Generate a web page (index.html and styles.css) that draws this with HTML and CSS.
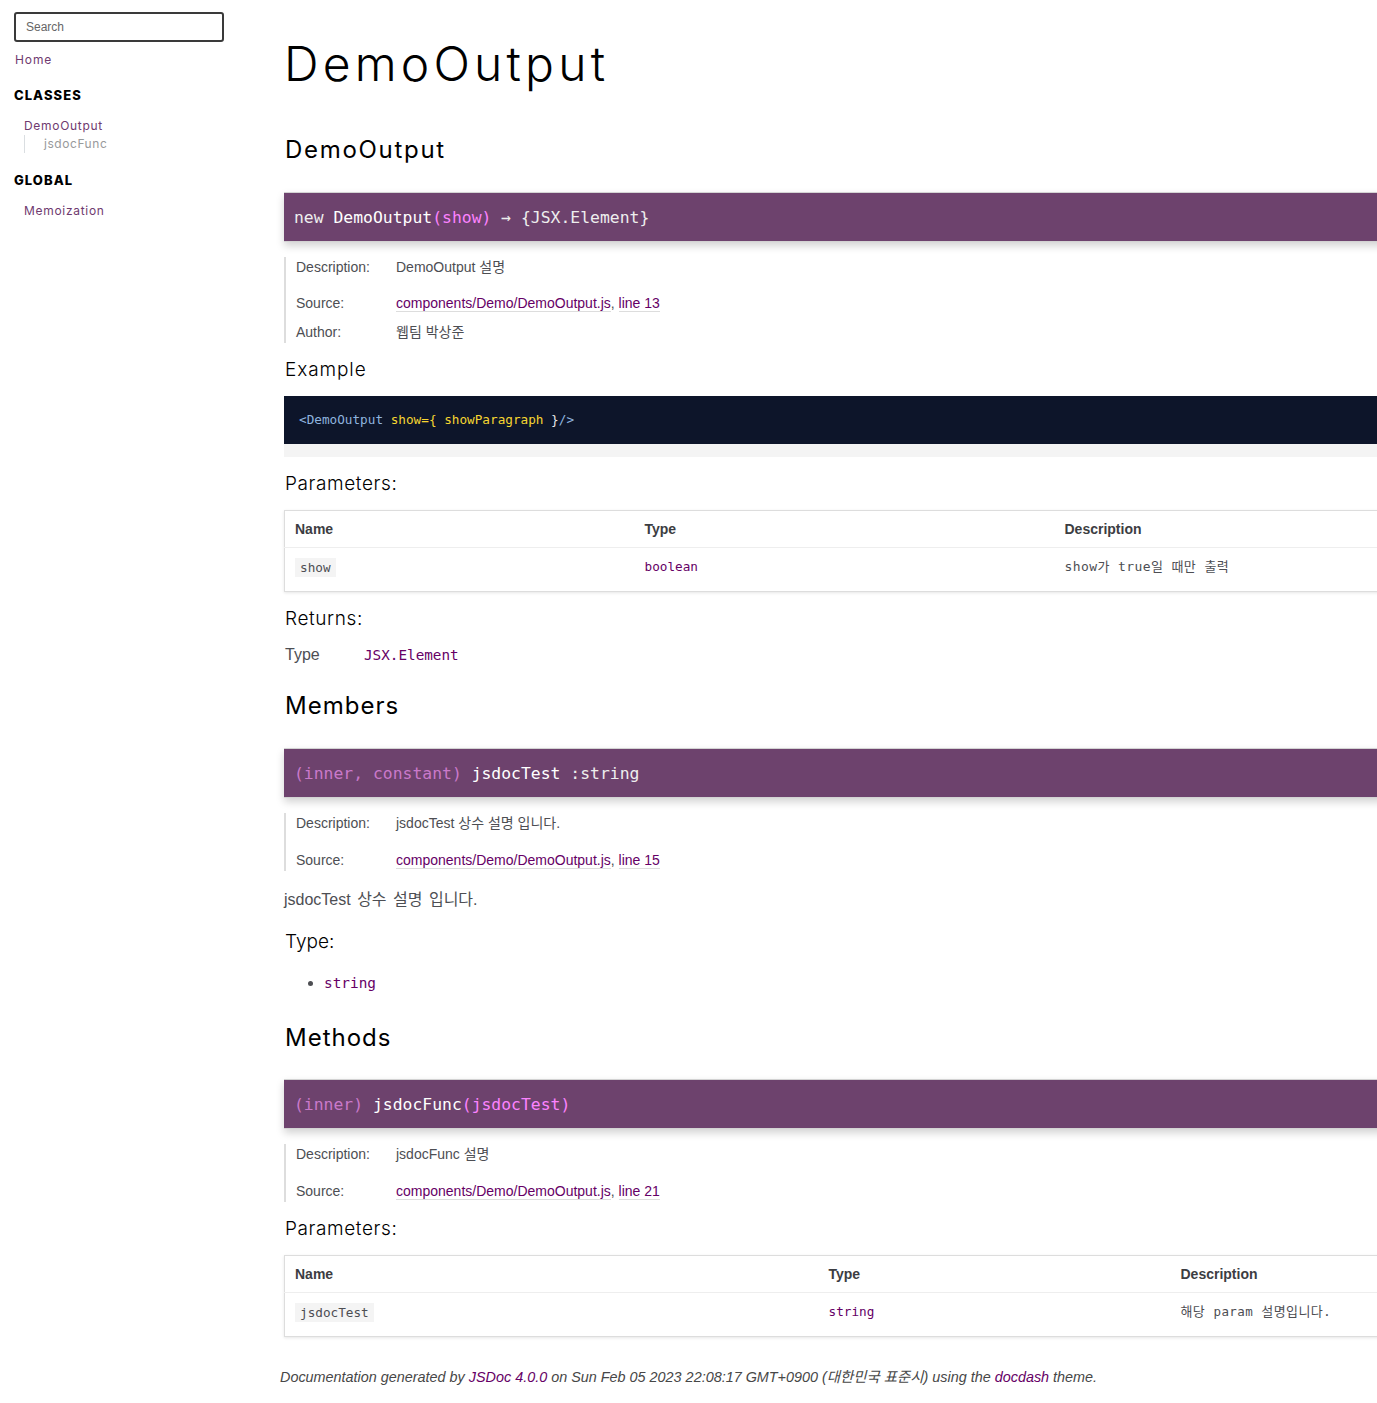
FILE: index.html
```html
<!DOCTYPE html>
<html lang="ko">
<head>
<meta charset="utf-8">
<title>DemoOutput - Documentation</title>
<link rel="stylesheet" href="styles.css">
</head>
<body>
<div class="page">
  <nav class="nav">
    <input class="search-box" type="text" placeholder="Search">
    <h2 class="nav-home"><a href="#">Home</a></h2>
    <h3 class="nav-title">Classes</h3>
    <ul class="nav-list">
      <li><a href="#" class="nav-link">DemoOutput</a>
        <ul class="nav-sub">
          <li><a href="#" class="nav-sublink">jsdocFunc</a></li>
        </ul>
      </li>
    </ul>
    <h3 class="nav-title nav-title-global">Global</h3>
    <ul class="nav-list">
      <li><a href="#" class="nav-link nav-link-global">Memoization</a></li>
    </ul>
  </nav>

  <div class="main">
    <h1 class="page-title">DemoOutput</h1>
    <section class="section">
      <h3 class="h-sub">DemoOutput</h3>

      <h4 class="name name-first"><span class="kw">new </span>DemoOutput<span class="signature">(show)</span><span class="type-last"> → {JSX.Element}</span></h4>

      <dl class="details">
        <div class="drow drow-desc"><dt>Description:</dt><dd>DemoOutput 설명</dd></div>
        <div class="drow drow-source"><dt>Source:</dt><dd><a class="ulink" href="#">components/Demo/DemoOutput.js</a>, <a class="ulink" href="#">line 13</a></dd></div>
        <div class="drow"><dt>Author:</dt><dd>웹팀 박상준</dd></div>
      </dl>

      <h5 class="h-small h-example">Example</h5>
      <pre class="prettyprint"><code class="code-block"><span class="tk-tag">&lt;DemoOutput</span> <span class="tk-atn">show</span><span class="tk-pun">=</span><span class="tk-brace">{</span> <span class="tk-atn">showParagraph</span> <span class="tk-pln">}</span><span class="tk-tag">/&gt;</span></code></pre>

      <h5 class="h-small h-params">Parameters:</h5>
      <table class="params params-one">
        <thead>
          <tr><th class="col-name1">Name</th><th class="col-type1">Type</th><th>Description</th></tr>
        </thead>
        <tbody>
          <tr>
            <td><code class="pcode">show</code></td>
            <td class="param-type">boolean</td>
            <td class="pdesc">show가 true일 때만 출력</td>
          </tr>
        </tbody>
      </table>

      <h5 class="h-small h-returns">Returns:</h5>
      <div class="returns"><span class="returns-label">Type</span><span class="param-type returns-type">JSX.Element</span></div>

      <h3 class="h-sub h-members">Members</h3>
      <h4 class="name name-next"><span class="type-sig">(inner, constant)</span> jsdocTest <span class="type-last">:string</span></h4>
      <dl class="details">
        <div class="drow drow-desc2"><dt>Description:</dt><dd>jsdocTest 상수 설명 입니다.</dd></div>
        <div class="drow"><dt>Source:</dt><dd><a class="ulink" href="#">components/Demo/DemoOutput.js</a>, <a class="ulink" href="#">line 15</a></dd></div>
      </dl>
      <p class="description">jsdocTest 상수 설명 입니다.</p>
      <h5 class="h-small h-type">Type:</h5>
      <ul class="type-list"><li><span class="param-type">string</span></li></ul>

      <h3 class="h-sub h-methods">Methods</h3>
      <h4 class="name name-next name-last"><span class="type-sig">(inner)</span> jsdocFunc<span class="signature">(jsdocTest)</span></h4>
      <dl class="details">
        <div class="drow drow-desc2"><dt>Description:</dt><dd>jsdocFunc 설명</dd></div>
        <div class="drow"><dt>Source:</dt><dd><a class="ulink" href="#">components/Demo/DemoOutput.js</a>, <a class="ulink" href="#">line 21</a></dd></div>
      </dl>

      <h5 class="h-small h-params2">Parameters:</h5>
      <table class="params params-two">
        <thead>
          <tr><th class="col-name2">Name</th><th class="col-type2">Type</th><th>Description</th></tr>
        </thead>
        <tbody>
          <tr>
            <td><code class="pcode">jsdocTest</code></td>
            <td class="param-type">string</td>
            <td class="pdesc">해당 <span class="pdesc-code">param</span> 설명입니다.</td>
          </tr>
        </tbody>
      </table>
    </section>

    <footer class="footer">Documentation generated by <a href="#">JSDoc 4.0.0</a> on Sun Feb 05 2023 22:08:17 GMT+0900 (대한민국 표준시) using the <a href="#">docdash</a> theme.</footer>
  </div>
</div>
</body>
</html>
```

FILE: styles.css
```css
* { box-sizing: border-box; }

html, body {
  margin: 0;
  padding: 0;
  background: #fff;
}

body {
  overflow: hidden;
  color: #4d4e53;
  font-family: "Liberation Sans", "Noto Sans CJK KR", Arial, sans-serif;
  font-size: 16px;
}

a { color: #606; text-decoration: none; }

.page {
  display: flex;
  align-items: flex-start;
}

/* ---------- Sidebar ---------- */
.nav {
  flex: none;
  width: 254px;
  padding: 12px 30px 0 14px;
}

.search-box {
  display: block;
  width: 210px;
  height: 30px;
  border: 2px solid #3a3a3a;
  border-radius: 3px;
  padding: 0 10px;
  font-family: "Liberation Sans", Arial, sans-serif;
  font-size: 12px;
  color: #333;
  background: #fff;
}
.search-box::placeholder { color: #666; }

.nav-home {
  margin: 9px 0 0 1px;
  font-size: 12px;
  font-weight: 400;
  line-height: 18px;
  letter-spacing: 0.9px;
  font-family: Inter, "Noto Sans", sans-serif;
}
.nav-home a { color: #6f3a6f; }

.nav-title {
  margin: 14px 0 0;
  font-family: Inter, "Noto Sans", sans-serif;
  font-size: 13px;
  font-weight: 800;
  text-transform: uppercase;
  letter-spacing: 1.05px;
  line-height: 24px;
  color: #000;
}
.nav-title-global { margin-top: 15px; }

.nav-list {
  list-style: none;
  margin: 0;
  padding: 0 10px;
}
.nav-link {
  display: block;
  margin-top: 10px;
  font-family: Inter, "Noto Sans", sans-serif;
  font-size: 12px;
  line-height: 18px;
  letter-spacing: 0.7px;
  color: #6f3a6f;
}
.nav-sub {
  list-style: none;
  margin: 0;
  padding: 0;
}
.nav-sublink {
  display: block;
  padding-left: 19px;
  border-left: 1px solid #dadee1;
  font-family: Inter, "Noto Sans", sans-serif;
  font-size: 12px;
  line-height: 18px;
  letter-spacing: 0.55px;
  color: #989a9b;
}

/* ---------- Main ---------- */
.main {
  flex: none;
  width: 1160px;
}

.page-title {
  margin: 40px 0 0 30px;
  font-family: Inter, "Noto Sans", sans-serif;
  font-size: 48px;
  font-weight: 300;
  line-height: 48px;
  color: #000;
  letter-spacing: 4.2px;
}

.section {
  padding-left: 30px;
}

.h-sub {
  margin: 47px 0 0 1px;
  font-family: Inter, "Noto Sans", sans-serif;
  font-size: 24px;
  font-weight: 400;
  line-height: 30px;
  color: #000;
  letter-spacing: 1.2px;
}
.section > .h-sub:first-child { letter-spacing: 1.7px; }
.h-members { margin-top: 26px; letter-spacing: 1px; }
.h-methods { margin-top: 28px; letter-spacing: 1px; }

.name {
  margin: 27px 0 0;
  padding: 13px 0 11px 10px;
  background: #6d426d;
  color: #fff;
  border-top: 1px solid #d3d3d3;
  border-bottom: 1px solid #d3d3d3;
  box-shadow: 0 4px 8px #d3d3d3;
  font-family: "DejaVu Sans Mono", "Noto Sans CJK KR", monospace;
  font-size: 16.4px;
  font-weight: 400;
  line-height: 24px;
}
.name-last { margin-top: 26px; }
.kw { color: #eee; }
.signature { color: #fc83ff; }
.type-sig { color: #ca79ca; }
.type-last { color: #eee; }

.details {
  margin: 15px 0 0;
  padding: 0 0 1px;
  border-left: 2px solid #ddd;
  font-size: 14px;
  line-height: 20px;
}
.drow {
  display: grid;
  grid-template-columns: 110px 1fr;
}
.drow-desc { margin-bottom: 16px; }
.drow-desc2 { margin-bottom: 17px; }
.drow-source { margin-bottom: 9px; }
.details dt {
  padding-left: 10px;
  color: #4d4e53;
}
.details dd {
  margin: 0;
  color: #4d4e53;
}
.ulink {
  color: #606;
  border-bottom: 1px solid #ddd;
}

.h-small {
  margin: 15px 0 0 1px;
  font-family: Inter, "Noto Sans", sans-serif;
  font-size: 19px;
  font-weight: 300;
  line-height: 24px;
  color: #000;
  letter-spacing: 0.6px;
}
.h-example { letter-spacing: 0.9px; }
.h-type { margin-top: 18px; letter-spacing: 0; }

.prettyprint {
  margin: 14px 0 0;
  padding: 0 0 13px;
  background: #f4f4f4;
}
.code-block {
  display: block;
  padding: 15px;
  background: #0d152a;
  font-family: "DejaVu Sans Mono", monospace;
  font-size: 12.7px;
  line-height: 18px;
  color: #aeaeae;
}
.tk-tag { color: #8fb4df; }
.tk-atn { color: #f6d531; }
.tk-pun { color: #f6d531; }
.tk-brace { color: #f6d531; }
.tk-pln { color: #e8e8e8; }

.params {
  width: 100%;
  margin: 14px 0 0;
  border: 1px solid #ddd;
  border-collapse: collapse;
  border-spacing: 0;
  box-shadow: 0 1px 3px rgba(0, 0, 0, 0.1);
  font-size: 14px;
}
.params th {
  padding: 10px;
  text-align: left;
  font-weight: 700;
  line-height: 16px;
  color: #3c3d42;
}
.params td {
  padding: 8px 10px 12px;
  border-top: 1px solid #eee;
  text-align: left;
  line-height: 22px;
  vertical-align: top;
}
.col-name1 { width: 350px; }
.col-type1 { width: 420px; }
.col-name2 { width: 534px; }
.col-type2 { width: 352px; }

.pcode {
  font-family: "DejaVu Sans Mono", monospace;
  font-size: 12.7px;
  background: #f4f4f4;
  padding: 2px 5px;
  color: #4d4e53;
}
.param-type {
  font-family: "DejaVu Sans Mono", "Noto Sans CJK KR", monospace;
  color: #606;
}
.params .param-type { font-size: 12.7px; }
.pdesc {
  font-family: "DejaVu Sans Mono", "Noto Sans CJK KR", monospace;
  font-size: 13px;
  color: #4d4e53;
  letter-spacing: 0.4px;
}
.pdesc-code { font-size: 12.5px; }

.returns {
  margin: 14px 0 0 1px;
  line-height: 20px;
  font-size: 16px;
}
.returns-label {
  display: inline-block;
  width: 79px;
  color: #4d4e53;
}
.returns-type { font-size: 14.3px; }

.description {
  margin: 17px 0 0;
  font-size: 16px;
  line-height: 24px;
  color: #4d4e53;
  word-spacing: 2px;
}

.type-list {
  margin: 17px 0 0;
  padding-left: 40px;
  line-height: 24px;
}
.type-list .param-type { font-size: 14.4px; }

.footer {
  margin: 30px 0 0;
  padding: 0 0 0 26px;
  font-size: 14.4px;
  font-style: italic;
  line-height: 20px;
  color: #474747;
}
.footer a { color: #606; }
```
